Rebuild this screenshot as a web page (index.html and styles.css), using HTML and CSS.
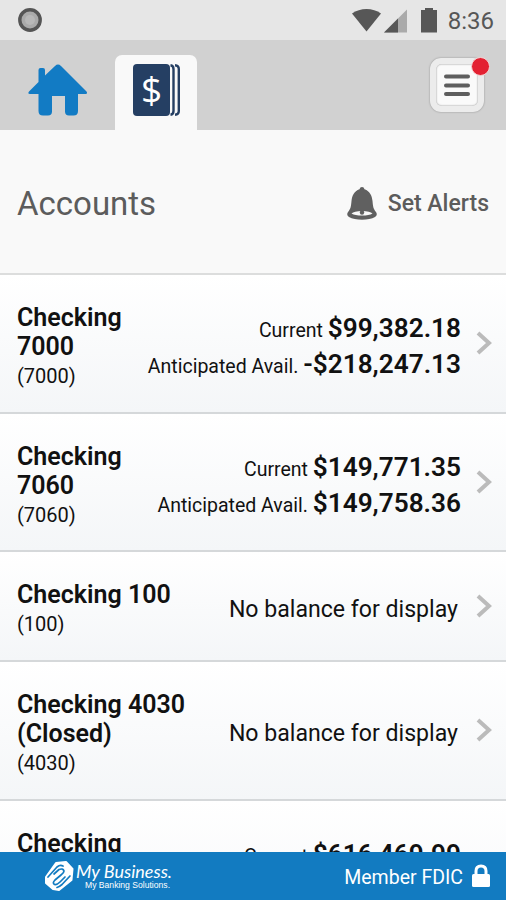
FILE: index.html
```html
<!DOCTYPE html>
<html lang="en">
<head>
    <meta charset="UTF-8">
    <meta name="viewport" content="width=device-width, initial-scale=1.0">
    <title>Accounts</title>
    <link rel="stylesheet" href="styles.css">
</head>
<body>

    <div class="status-bar">
        <svg class="status-dot" width="24" height="24" viewBox="0 0 24 24">
            <circle cx="12" cy="12" r="10.2" fill="#aaa" stroke="#555" stroke-width="3.4"/>
            <circle cx="12" cy="12" r="5" fill="#b8b8b8"/>
        </svg>
        <div class="status-icons">
            <svg width="86" height="26" viewBox="0 0 86 26">
                <path d="M0 6.5C8 .5 21 .5 29 6.500L14.500 24.500Z" fill="#575757"/>
                <path d="M32 25.500L55 2.500V25.500Z" fill="#aaa"/>
                <path d="M32 25.500L46 11.500V25.500Z" fill="#575757"/>
                <path d="M69 3H73V1H81V3H85V25.500H69Z" fill="#575757"/>
            </svg>
            <span class="clock">8:36</span>
        </div>
    </div>

    <nav class="tabs">
        <a class="tab" href="#">
            <svg width="60" height="53" viewBox="0 0 60 53">
                <path d="M10.500 6Q10.500 4 12.500 4H15Q17 4 17 6V11.500L27 2Q30 -.8 33 2L58.500 27.500Q60 30 57.500 30H50V47Q50 51.500 45.500 51.500H41Q37 51.500 37 47.500V32H24V47.500Q24 51.500 20 51.500H15Q10.500 51.500 10.500 47V30H2Q-.8 30 1 27.500L10.500 18Z" fill="#127bc4"/>
            </svg>
        </a>
        <a class="tab active" href="#">
            <svg width="48" height="52" viewBox="0 0 48 52">
                <rect x="0" y="0" width="37" height="52" rx="4" fill="#253f63"/>
                <path d="M37.500 1.200Q40.500 1.500 40.500 5V47Q40.500 50.500 37.500 50.800M42 1.200Q45.800 1.500 45.800 5V47Q45.800 50.500 42 50.800" fill="none" stroke="#253f63" stroke-width="2.400"/>
                <text x="18.500" y="38.500" class="dollar">$</text>
            </svg>
        </a>
        <button type="button" class="menu-button">
            <svg width="26" height="24" viewBox="0 0 26 24">
                <path d="M2 3.500H24M2 12.500H24M2 21H24" stroke="#5e5e5e" stroke-width="4" stroke-linecap="round"/>
            </svg>
            <span class="badge"></span>
        </button>
    </nav>

    <header class="page-header">
        <h1>Accounts</h1>
        <a class="alerts" href="#">
            <svg width="30" height="33" viewBox="0 0 30 33">
                <path d="M15 0Q17 0 17.500 2.200C23 4 25 9 25.500 14C26 20 26.500 22 29 25Q31 28 28 30C22 33.500 8 33.500 2 30Q-1 28 1 25C3.500 22 4 20 4.500 14C5 9 7 4 12.500 2.200Q13 0 15 0Z" fill="#606060"/>
                <path d="M4.500 26.500Q7 24 15 24T25.500 26.500Q22 28.500 15 28.500T4.500 26.500Z" fill="#f9f9f9"/>
                <circle cx="15" cy="25.500" r="2.200" fill="#606060"/>
            </svg>
            <span>Set Alerts</span>
        </a>
    </header>

    <main class="accounts">
        <a class="account" href="#">
            <div class="account-name narrow">
                <h2>Checking 7000</h2>
                <p>(7000)</p>
            </div>
            <div class="balances">
                <p>Current <b>$99,382.18</b></p>
                <p>Anticipated Avail. <b>-$218,247.13</b></p>
            </div>
            <svg class="chevron" width="16" height="24" viewBox="0 0 16 24"><path d="M2 2L13 12L2 22"/></svg>
        </a>
        <a class="account" href="#">
            <div class="account-name narrow">
                <h2>Checking 7060</h2>
                <p>(7060)</p>
            </div>
            <div class="balances">
                <p>Current <b>$149,771.35</b></p>
                <p>Anticipated Avail. <b>$149,758.36</b></p>
            </div>
            <svg class="chevron" width="16" height="24" viewBox="0 0 16 24"><path d="M2 2L13 12L2 22"/></svg>
        </a>
        <a class="account" href="#">
            <div class="account-name">
                <h2>Checking 100</h2>
                <p>(100)</p>
            </div>
            <div class="no-balance">No balance for display</div>
            <svg class="chevron" width="16" height="24" viewBox="0 0 16 24"><path d="M2 2L13 12L2 22"/></svg>
        </a>
        <a class="account" href="#">
            <div class="account-name">
                <h2>Checking 4030 (Closed)</h2>
                <p>(4030)</p>
            </div>
            <div class="no-balance">No balance for display</div>
            <svg class="chevron" width="16" height="24" viewBox="0 0 16 24"><path d="M2 2L13 12L2 22"/></svg>
        </a>
        <a class="account last" href="#">
            <div class="account-name narrow">
                <h2>Checking</h2>
            </div>
            <div class="balances">
                <p>Current <b>$616,469.99</b></p>
            </div>
            <svg class="chevron" width="16" height="24" viewBox="0 0 16 24"><path d="M2 2L13 12L2 22"/></svg>
        </a>
    </main>

    <footer class="footer">
        <div class="brand">
            <svg width="30" height="32" viewBox="0 0 30 32" stroke-linejoin="round" stroke-linecap="round">
                <path d="M2 17L12 3L22 2L28.500 9L27.500 20L15 30L9 29L2 23Z" fill="#fff" stroke="#fff" stroke-width="2"/>
                <path d="M4 17L13 7Q16 4.500 19 6M10 14L15 9.500Q19 8 20 11Q20 13 17 15L11 20Q8 23 10.500 24.500Q13 25 16 22L21 17M13 27.500Q15 27 18 24.500L26 16" fill="none" stroke="#127bc1" stroke-width="1.700"/>
            </svg>
            <div class="brand-text">
                <span class="brand-name">My Business.</span>
                <span class="brand-tag">My Banking Solutions.</span>
            </div>
        </div>
        <div class="fdic">
            <span>Member FDIC</span>
            <svg width="18" height="24" viewBox="0 0 18 24">
                <path d="M4 11V7Q4 2 9 2T14 7V11" fill="none" stroke="#fff" stroke-width="3"/>
                <rect x="0" y="10" width="18" height="13" rx="1.500" fill="#fff"/>
            </svg>
        </div>
    </footer>

</body>
</html>
```
FILE: styles.css
```css
* {
    box-sizing: border-box;
}
body {
    font-family: Roboto, sans-serif;
    margin: 0;
    height: 900px;
    display: flex;
    flex-direction: column;
    overflow: hidden;
    background-color: #f9f9f9;
    color: #111;
}
h1, h2, p {
    margin: 0;
}
a {
    color: inherit;
    text-decoration: none;
}
svg {
    display: block;
    flex-shrink: 0;
}
.status-bar {
    height: 40px;
    flex-shrink: 0;
    display: flex;
    align-items: center;
    justify-content: space-between;
    padding: 0 12px 0 18px;
    background-color: #e6e6e6;
}
.status-icons {
    display: flex;
    align-items: center;
    gap: 10px;
}
.clock {
    font-size: 24px;
    line-height: 40px;
    padding-top: 2px;
    color: #575757;
}
.tabs {
    height: 90px;
    flex-shrink: 0;
    display: flex;
    align-items: flex-end;
    background-color: #d1d1d1;
}
.tab {
    width: 115px;
    height: 75px;
    display: flex;
    justify-content: center;
    padding-top: 9px;
}
.tab.active {
    width: 82px;
    padding-left: 2px;
    border-radius: 7px 7px 0 0;
    background-color: #f9f9f9;
}
.dollar {
    font-family: "Open Sans", sans-serif;
    font-size: 37px;
    fill: #fff;
    text-anchor: middle;
}
.menu-button {
    position: relative;
    width: 54px;
    height: 54px;
    margin: 0 22px 18px auto;
    padding: 0;
    display: flex;
    align-items: center;
    justify-content: center;
    border: 6px solid #ececec;
    border-radius: 11px;
    background-color: #fafafa;
    box-shadow: 0 0 2px rgba(0, 0, 0, 0.35), inset 0 0 2px rgba(0, 0, 0, 0.5);
}
.badge {
    position: absolute;
    top: -7px;
    right: -12px;
    width: 19px;
    height: 19px;
    border: 1px solid #f4d4d4;
    border-radius: 50%;
    background-color: #e32132;
}
.page-header {
    height: 145px;
    flex-shrink: 0;
    display: flex;
    align-items: center;
    justify-content: space-between;
    padding: 4px 17px 0;
    border-bottom: 2px solid #dcdddd;
    color: #5c5c5c;
}
.page-header h1 {
    font-size: 33px;
    font-weight: 400;
}
.alerts {
    display: flex;
    align-items: center;
    gap: 11px;
    font-size: 23px;
    font-weight: 500;
}
.accounts {
    flex: 1;
    min-height: 0;
    overflow: hidden;
}
.account {
    display: flex;
    align-items: center;
    padding: 0 14px 0 17px;
    border-bottom: 2px solid #d5d8da;
    background: linear-gradient(#fff, #f4f6f8);
}
.account-name {
    width: 190px;
    padding: 28px 0 19.7px;
}
.account-name.narrow {
    width: 120px;
}
.account-name h2 {
    font-size: 25px;
    line-height: 29px;
    font-weight: 600;
}
.account-name p {
    font-size: 20px;
    line-height: 31px;
}
.balances, .no-balance {
    flex: 1;
    text-align: right;
    white-space: nowrap;
}
.balances {
    padding: 11px 15px 0 0;
    font-size: 19.5px;
    line-height: 36px;
}
.balances b {
    font-size: 26.2px;
    line-height: 0;
    font-weight: 600;
}
.no-balance {
    padding: 6px 18px 0 0;
    font-size: 23.1px;
}
.account.last {
    height: 139px;
    align-items: flex-start;
}
.account.last .balances {
    padding-top: 38px;
}
.account.last .chevron {
    align-self: center;
}
.chevron path {
    fill: none;
    stroke: #bbb;
    stroke-width: 4;
}
.footer {
    height: 48px;
    flex-shrink: 0;
    display: flex;
    align-items: center;
    justify-content: space-between;
    padding: 0 16px 0 44px;
    background-color: #127bc1;
    color: #fff;
}
.brand {
    display: flex;
    align-items: center;
    gap: 2px;
}
.brand-text {
    display: flex;
    flex-direction: column;
}
.brand-name {
    font-family: Lato, sans-serif;
    font-size: 18px;
    line-height: 19px;
    font-style: italic;
}
.brand-tag {
    padding-left: 9px;
    font-family: "Liberation Sans", sans-serif;
    font-size: 8.6px;
    line-height: 9px;
}
.fdic {
    display: flex;
    align-items: center;
    gap: 9px;
    font-size: 19.5px;
}
.fdic span {
    padding-top: 2px;
}
```
